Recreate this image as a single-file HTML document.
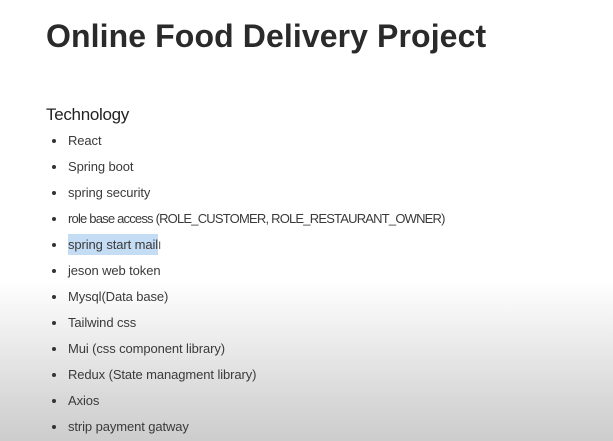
<!DOCTYPE html>
<html><head><style>
html,body{margin:0;padding:0;}
body{width:613px;height:441px;overflow:hidden;font-family:"Liberation Sans",sans-serif;
background:linear-gradient(to bottom,#fff 0px,#fff 280px,#ececec 340px,#d8d8d8 400px,#cdcdcd 441px);position:relative;}
h1{position:absolute;left:46px;top:18px;margin:0;font-size:32px;font-weight:bold;color:#2a2a2a;letter-spacing:0.1px;}
h2{position:absolute;left:46px;top:105px;margin:0;font-size:17px;font-weight:normal;color:#222;letter-spacing:-0.3px;}
ul{position:absolute;left:0;top:131px;margin:0;padding:0;list-style:none;}
li{position:absolute;left:68px;white-space:nowrap;font-size:13px;letter-spacing:-0.1px;color:#3a3a3a;height:20px;line-height:20px;}
li:before{content:"";position:absolute;left:-16px;top:8px;width:4px;height:4px;border-radius:50%;background:#333;}
.hl{background:#c5dcf5;padding:3px 0;}
</style></head><body>
<h1>Online Food Delivery Project</h1>
<h2>Technology</h2>
<ul>
<li style="top:0">React</li>
<li style="top:26px">Spring boot</li>
<li style="top:52px">spring security</li>
<li style="top:78px;letter-spacing:-0.8px">role base access (ROLE_CUSTOMER, ROLE_RESTAURANT_OWNER)</li>
<li style="top:104px"><span class="hl">spring start mail</span><span style="color:#555;font-size:11px">I</span></li>
<li style="top:130px">jeson web token</li>
<li style="top:156px">Mysql(Data base)</li>
<li style="top:182px">Tailwind css</li>
<li style="top:208px">Mui (css component library)</li>
<li style="top:234px">Redux (State managment library)</li>
<li style="top:260px">Axios</li>
<li style="top:286px">strip payment gatway</li>
</ul>
</body></html>
